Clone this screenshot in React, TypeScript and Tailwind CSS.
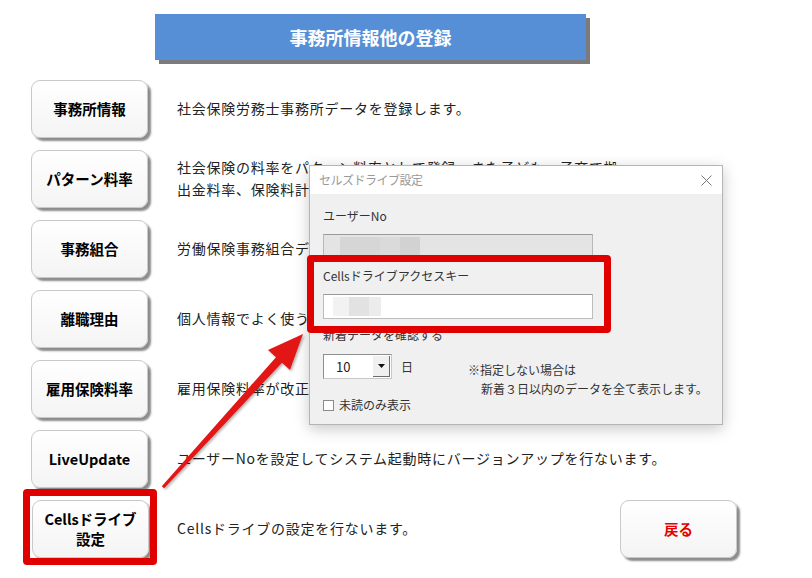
import React from "react";

const font = { fontFamily: '"Noto Sans CJK JP", "Noto Sans", sans-serif' };

function MenuButton({ label, red }: { label: React.ReactNode; red?: boolean }) {
  return (
    <div
      className={`w-[117px] h-[58px] shrink-0 rounded-[9px] bg-gradient-to-b from-white to-[#f4f4f4] border border-[#c9c9c9] shadow-[3px_3px_2px_#8c8c8c] flex items-center justify-center text-center font-bold text-[14.5px] leading-[20px] ${red ? "text-[#e60000]" : "text-black"}`}
    >
      {label}
    </div>
  );
}

function Row({ label, children }: { label: React.ReactNode; children: React.ReactNode }) {
  return (
    <div className="flex items-center h-[58px]">
      <div className="ml-[31px]">
        <MenuButton label={label} />
      </div>
      <div className="ml-[29px] -mt-[2px] text-[14px] leading-[22px] tracking-[0.75px] text-[#222] whitespace-nowrap">{children}</div>
    </div>
  );
}

export default function App() {
  return (
    <div className="relative w-[812px] h-[578px] bg-white overflow-hidden" style={font}>
      {/* banner */}
      <div className="ml-[155px] pt-[14px]">
        <div className="w-[431px] h-[46px] bg-[#578fd6] shadow-[4px_4px_0_#7b7b7b] flex items-center justify-center text-white font-bold text-[18px]">
          事務所情報他の登録
        </div>
      </div>

      {/* rows */}
      <div className="mt-[20px] flex flex-col gap-[12px]">
        <Row label="事務所情報">社会保険労務士事務所データを登録します。</Row>
        <Row label="パターン料率">
          社会保険の料率をパターン料率として登録。また子ども・子育て拠
          <br />
          出金料率、保険料計算方法を設定します。
        </Row>
        <Row label="事務組合">労働保険事務組合データを登録します。</Row>
        <Row label="離職理由">個人情報でよく使う離職理由を登録します。</Row>
        <Row label="雇用保険料率">雇用保険料率が改正された場合に料率を登録します。</Row>
        <Row label="LiveUpdate">ユーザーNoを設定してシステム起動時にバージョンアップを行ないます。</Row>
        <div className="flex items-center h-[58px]">
          <div className="ml-[32px]">
            <MenuButton
              label={
                <span>
                  Cellsドライブ
                  <br />
                  設定
                </span>
              }
            />
          </div>
          <div className="ml-[28px] -mt-[2px] text-[14px] tracking-[0.75px] text-[#222] whitespace-nowrap">Cellsドライブの設定を行ないます。</div>
          <div className="ml-auto mr-[75px]">
            <MenuButton red label="戻る" />
          </div>
        </div>
      </div>

      {/* dialog */}
      <div className="absolute left-[309px] top-[165px] w-[414px] h-[260px] bg-[#f0f0f0] border border-[#b5b5b5] shadow-[0_4px_14px_rgba(0,0,0,0.22)] flex flex-col">
        <div className="h-[28px] bg-white flex items-center justify-between pl-[9px] pr-[9px]">
          <span className="text-[12px] text-[#9a9a9a] tracking-[-0.5px]">セルズドライブ設定</span>
          <svg width="11" height="11" viewBox="0 0 11 11" className="mr-[1px]">
            <path d="M0.5 0.5 L10.5 10.5 M10.5 0.5 L0.5 10.5" stroke="#777" strokeWidth="1" fill="none" />
          </svg>
        </div>
        <div className="pl-[13px] text-[12px] text-[#333] flex flex-col">
          <div className="mt-[14px] h-[16px] leading-[16px]">ユーザーNo</div>
          <div className="mt-[10px] w-[270px] h-[25px] bg-[#e4e4e4] border border-[#b8b8b8] border-t-[#9a9a9a] flex items-center pl-[16px]">
            <div className="w-[40px] h-[19px] bg-[#d6d6d6]" />
            <div className="w-[20px] h-[19px] bg-[#dadada]" />
            <div className="w-[20px] h-[19px] bg-[#d2d2d2]" />
          </div>
          <div className="mt-[9px] h-[16px] leading-[16px]">Cellsドライブアクセスキー</div>
          <div className="mt-[10px] w-[270px] h-[25px] bg-white border border-[#bdbdbd] border-t-[#999] flex items-center pl-[9px]">
            <div className="w-[16px] h-[19px] bg-[#f2f2f2]" />
            <div className="w-[20px] h-[19px] bg-[#e2e2e2]" />
            <div className="w-[12px] h-[19px] bg-[#ececec]" />
          </div>
          <div className="mt-[8px] h-[16px] leading-[16px]">新着データを確認する</div>
          <div className="mt-[11px] flex items-start">
            <div className="flex flex-col">
              <div className="flex items-center">
                <div className="w-[69px] h-[25px] bg-white border border-[#8e8e8e] border-r-[#c8c8c8] border-b-[#c8c8c8] flex items-center">
                  <span className="ml-[12px] text-[13px] text-[#222]">10</span>
                  <div className="ml-auto mr-[1px] w-[17px] h-[21px] bg-[#f0f0f0] border-r border-b border-[#6d6d6d] flex items-center justify-center">
                    <svg width="7" height="4" viewBox="0 0 7 4">
                      <path d="M0 0 L7 0 L3.5 4 Z" fill="#111" />
                    </svg>
                  </div>
                </div>
                <span className="ml-[9px] text-[12px]">日</span>
              </div>
              <div className="mt-[18px] flex items-center h-[16px]">
                <div className="w-[11px] h-[11px] bg-white border border-[#8a8a8a]" />
                <span className="ml-[5px]">未読のみ表示</span>
              </div>
            </div>
            <div className="ml-[55px] mt-[6px] leading-[19px] text-[12px]">
              <div>※指定しない場合は</div>
              <div className="ml-[13px]">新着３日以内のデータを全て表示します。</div>
            </div>
          </div>
        </div>
      </div>

      {/* red highlight boxes */}
      <div className="absolute left-[307px] top-[255px] w-[304px] h-[78px] border-[7px] border-[#e00000] rounded-[4px]" />
      <div className="absolute left-[23px] top-[489px] w-[134px] h-[76px] border-[7px] border-[#e00000] rounded-[4px]" />

      {/* arrow */}
      <svg className="absolute left-0 top-0 pointer-events-none" width="812" height="578" viewBox="0 0 812 578">
        <defs>
          <filter id="sh" x="-20%" y="-20%" width="140%" height="140%">
            <feDropShadow dx="1.5" dy="1.5" stdDeviation="1.2" floodColor="#000" floodOpacity="0.3" />
          </filter>
        </defs>
        <polygon
          points="161.8,486.2 276,357.3 268,350 303,334 290,370 282,362.7 164.2,488.2"
          fill="#e31414"
          filter="url(#sh)"
        />
      </svg>
    </div>
  );
}
